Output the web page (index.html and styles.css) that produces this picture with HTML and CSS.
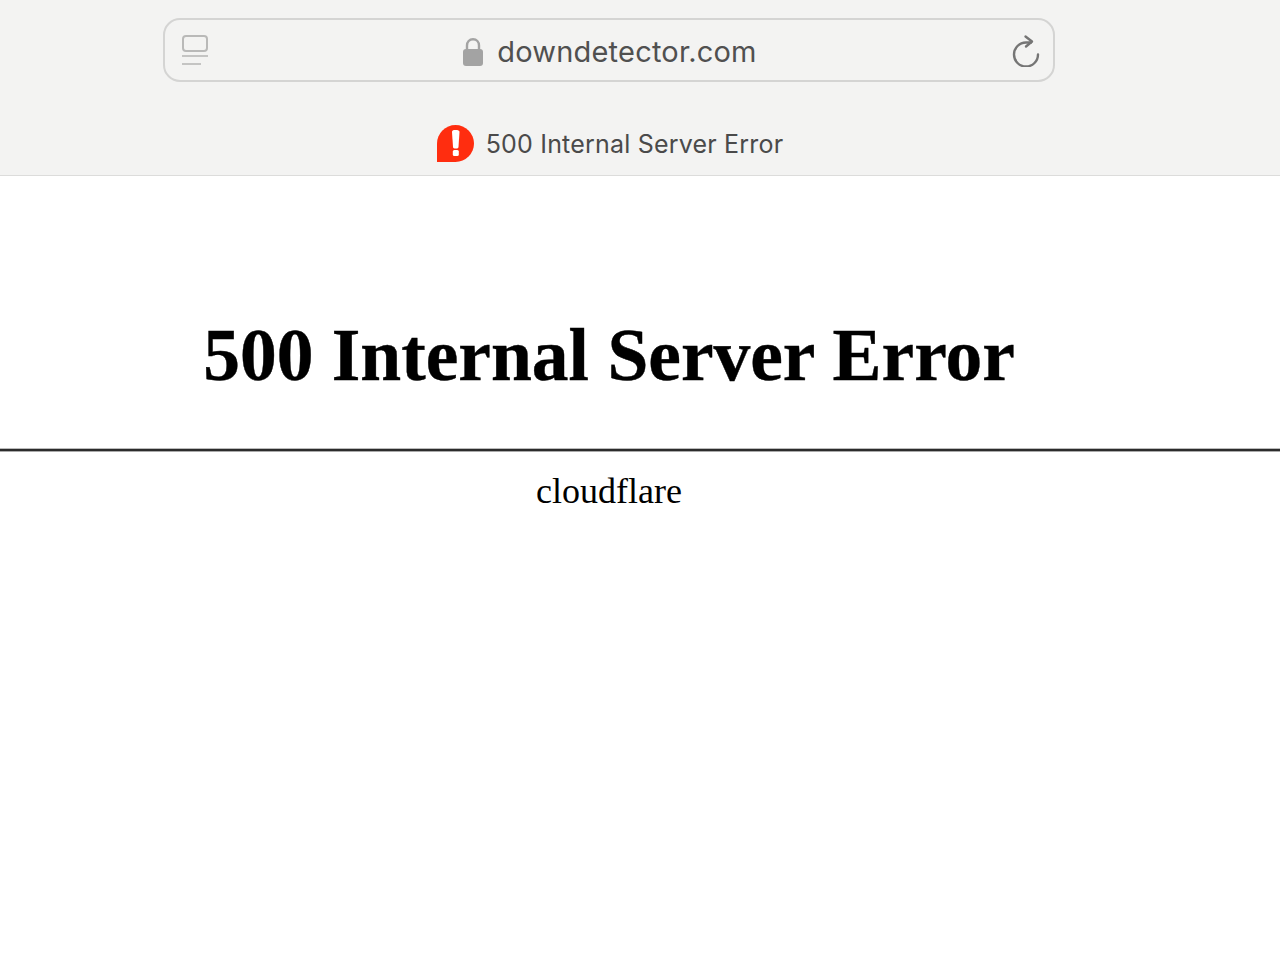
FILE: index.html
```html
<!DOCTYPE html>
<html lang="en">
<head>
    <meta charset="UTF-8">
    <meta name="viewport" content="width=device-width, initial-scale=1.0">
    <title>500 Internal Server Error</title>
    <link rel="stylesheet" href="styles.css">
</head>
<body>
    <div class="toolbar">
        <div class="urlbar">
            <svg class="icon-reader" width="28" height="32" viewBox="0 0 28 32">
                <rect x="2" y="2" width="24" height="15" rx="3" fill="none" stroke="#b9b9b8" stroke-width="2"/>
                <rect x="1" y="21" width="26" height="2" fill="#c4c4c3"/>
                <rect x="1" y="29" width="19" height="2" fill="#c4c4c3"/>
            </svg>
            <div class="address">
                <svg class="icon-lock" width="22" height="30" viewBox="0 0 22 30">
                    <path d="M5 13V8.500C5 4.800 7.400 2.300 11 2.300C14.600 2.300 17 4.800 17 8.500V13" fill="none" stroke="#a3a3a3" stroke-width="2.400"/>
                    <rect x="1" y="12" width="20" height="17" rx="3" fill="#a3a3a3"/>
                </svg>
                <span class="domain">downdetector.com</span>
            </div>
            <svg class="icon-reload" width="30" height="34" viewBox="0 0 30 34">
                <path d="M28 21.500A12 12 0 1 1 16 9.500H21" fill="none" stroke="#757575" stroke-width="2.400" stroke-linecap="round"/>
                <path d="M15.500 3.500L22 8.500L16 13.500" fill="none" stroke="#757575" stroke-width="2.400" stroke-linecap="round" stroke-linejoin="round"/>
            </svg>
        </div>
        <div class="tab">
            <svg width="37" height="37" viewBox="0 0 37 37">
                <path d="M0 37V18.500A18.500 18.500 0 1 1 18.500 37Z" fill="#ff2d0f"/>
                <path d="M15 7C15 5.500 16 5 18.500 5C21 5 22.500 5.500 22.500 7L21.500 22C21.400 23 20.500 23.500 18.800 23.500C17 23.500 16.100 23 16 22Z" fill="#fff"/>
                <rect x="15.800" y="25" width="6" height="6" rx="1.500" fill="#fff"/>
            </svg>
            <span class="tab-title">500 Internal Server Error</span>
        </div>
    </div>

    <h1>500 Internal Server Error</h1>
    <hr>
    <div class="server">cloudflare</div>
</body>
</html>
```

FILE: styles.css
```css
body {
    margin: 0;
    background-color: white;
    color: black;
    font-family: "Liberation Serif", serif;
    text-rendering: optimizeLegibility;
}

.toolbar {
    height: 157px;
    padding: 18px 62px 0 0;
    display: flex;
    flex-direction: column;
    align-items: center;
    background-color: #f3f3f2;
    border-bottom: 1px solid #dcdcdb;
    font-family: Inter, sans-serif;
}

.urlbar {
    width: 892px;
    height: 64px;
    box-sizing: border-box;
    padding: 0 13px 0 16px;
    display: flex;
    align-items: center;
    justify-content: space-between;
    border: 2px solid #d4d4d3;
    border-radius: 17px;
}

.address {
    display: flex;
    align-items: center;
    gap: 13px;
}

.icon-lock {
    margin-top: 4px;
}

.domain {
    margin-top: 2px;
    font-size: 29px;
    letter-spacing: 0.2px;
    color: #505050;
}

.tab {
    margin-top: 43px;
    padding-left: 2px;
    display: flex;
    align-items: center;
    gap: 12px;
}

.tab-title {
    font-size: 25px;
    letter-spacing: 0.2px;
    color: #4a4a4a;
}

h1 {
    margin: 139px 62px 0 0;
    text-align: center;
    font-size: 73.5px;
    -webkit-text-stroke: 0.4px black;
    line-height: 82px;
}

hr {
    margin: 51px 0 0;
    height: 2px;
    border: none;
    border-top: 1px solid #bbb;
    border-bottom: 1px solid #aaa;
    background-color: #2c2c2c;
}

.server {
    margin-top: 18px;
    padding-right: 62px;
    text-align: center;
    font-size: 36px;
    line-height: 42px;
}
```
